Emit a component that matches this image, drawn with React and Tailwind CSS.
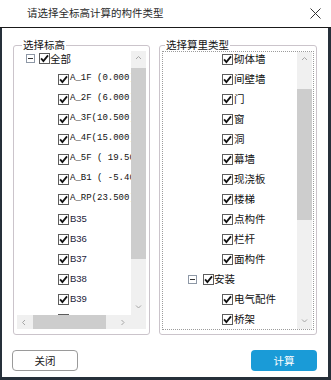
import React from 'react'

const cjk = "font-['Microsoft_YaHei','Noto_Sans_CJK_SC',sans-serif]"

function Check() {
  return (
    <svg width="11" height="11" viewBox="0 0 11 11" className="shrink-0">
      <rect x="0.5" y="0.5" width="10" height="10" fill="#fff" stroke="#5c5c5c" />
      <path d="M2.1 5.4 L4.4 8.1 L9 2.4" fill="none" stroke="#111" strokeWidth="1.8" />
    </svg>
  )
}

function Minus() {
  return (
    <svg width="9" height="9" viewBox="0 0 9 9" className="shrink-0">
      <rect x="0.5" y="0.5" width="8" height="8" fill="#fff" stroke="#8e98a6" />
      <path d="M2 4.5 H7" stroke="#333" />
    </svg>
  )
}

function Chevron({ dir }) {
  const d = {
    up: 'M1 4 L3.5 1.5 L6 4',
    down: 'M1 1.5 L3.5 4 L6 1.5',
    left: 'M4 1 L1.5 3.5 L4 6',
    right: 'M1.5 1 L4 3.5 L1.5 6',
  }[dir]
  return (
    <svg width="7" height="7" viewBox="0 0 7 7">
      <path d={d} fill="none" stroke="#a6a6a6" strokeWidth="1" />
    </svg>
  )
}

function VScroll({ gapTop, thumb }) {
  return (
    <div className="flex flex-col bg-[#f0f0f0]">
      <div className="flex h-[15px] items-center justify-center">
        <Chevron dir="up" />
      </div>
      <div className="flex-1">
        <div className="bg-[#cdcdcd]" style={{ marginTop: gapTop, height: thumb }} />
      </div>
      <div className="flex h-[15px] items-center justify-center">
        <Chevron dir="down" />
      </div>
    </div>
  )
}

const levels = [
  ['A_1F\u00a0(0.000)', 'mono'],
  ['A_2F\u00a0(6.000)', 'mono'],
  ['A_3F(10.500)', 'mono'],
  ['A_4F(15.000)', 'mono'],
  ['A_5F\u00a0(\u00a019.500)', 'mono'],
  ['A_B1\u00a0(\u00a0-5.400)', 'mono'],
  ['A_RP(23.500)', 'mono'],
  ['B35', 'sans'],
  ['B36', 'sans'],
  ['B37', 'sans'],
  ['B38', 'sans'],
  ['B39', 'sans'],
  ['B40', 'sans'],
]

const civil = ['砌体墙', '间壁墙', '门', '窗', '洞', '幕墙', '现浇板', '楼梯', '点构件', '栏杆', '面构件']
const install = ['电气配件', '桥架']

export default function App() {
  return (
    <div className={`flex h-[380px] w-[331px] flex-col bg-white text-[#111] ${cjk}`}>
      <div className="flex h-[28px] shrink-0 items-center border-b border-[#1a1a1a] pl-[27px] pr-[10px]">
        <span className="flex-1 pb-[1px] text-[10.5px] text-[#2a2a2a]">请选择全标高计算的构件类型</span>
        <svg width="11" height="11" viewBox="0 0 11 11">
          <path d="M0.5 0.5 L10.5 10.5 M10.5 0.5 L0.5 10.5" stroke="#333" strokeWidth="1" />
        </svg>
      </div>

      <div className="flex flex-1 flex-col border-b-[3px] border-l-2 border-r-[3px] border-[#26303a] px-[11px] pt-[11px] pb-[6px]">
        <div className="flex h-[296px] justify-between">
          <fieldset className="flex h-[296px] w-[137px] min-w-0 flex-col rounded-[3px] border border-[#cbc4cb] px-[3px] pb-[5px]">
            <legend className="ml-[5px] px-[1px] text-[10.5px] leading-[12px]">选择标高</legend>
            <div className="grid min-h-0 flex-1 grid-cols-[1fr_15px] grid-rows-[1fr_14px]">
              <div className="flex min-w-0 flex-col overflow-hidden">
                <div className="flex h-[18px] shrink-0 items-start pt-[2px] pl-[9px]">
                  <div className="mt-[1px]">
                    <Minus />
                  </div>
                  <div className="ml-[4px]">
                    <Check />
                  </div>
                  <span className="text-[10.5px] leading-[11px]">全部</span>
                </div>
                {levels.map(([label, kind]) => (
                  <div key={label} className="flex h-[20px] shrink-0 items-center pl-[41px]">
                    <Check />
                    <span
                      className={
                        kind === 'mono'
                          ? "ml-[1px] whitespace-pre font-['Liberation_Mono',monospace] text-[9px] text-[#111]"
                          : "ml-[1px] font-['Liberation_Sans',sans-serif] text-[9.5px] text-[#1a1a3a]"
                      }
                    >
                      {label}
                    </span>
                  </div>
                ))}
              </div>
              <VScroll gapTop={2} thumb={191} />
              <div className="flex items-center bg-[#f0f0f0]">
                <div className="flex w-[15px] justify-center">
                  <Chevron dir="left" />
                </div>
                <div className="ml-[1px] h-full w-[73px] bg-[#cdcdcd]" />
                <div className="flex-1" />
                <div className="flex w-[15px] justify-center">
                  <Chevron dir="right" />
                </div>
              </div>
              <div className="bg-[#f0f0f0]" />
            </div>
          </fieldset>

          <fieldset className="flex h-[296px] w-[158px] min-w-0 flex-col rounded-[3px] border border-[#cbc4cb] px-[2px] pb-[4px]">
            <legend className="ml-[3px] px-[1px] text-[10.5px] leading-[12px]">选择算里类型</legend>
            <div className="grid min-h-0 flex-1 grid-cols-[1fr_15px] border border-dotted border-[#9c9c9c] pr-[1px]">
              <div className="flex min-w-0 flex-col overflow-hidden">
                <div className="-mt-[3px] flex flex-col">
                  {civil.map((name) => (
                    <div key={name} className="flex h-[20px] shrink-0 items-center pl-[59px]">
                      <Check />
                      <span className="ml-[1px] text-[10.5px]">{name}</span>
                    </div>
                  ))}
                  <div className="flex h-[20px] shrink-0 items-center pl-[25px]">
                    <Minus />
                    <div className="ml-[6px]">
                      <Check />
                    </div>
                    <span className="text-[10.5px]">安装</span>
                  </div>
                  {install.map((name) => (
                    <div key={name} className="flex h-[20px] shrink-0 items-center pl-[59px]">
                      <Check />
                      <span className="ml-[1px] text-[10.5px]">{name}</span>
                    </div>
                  ))}
                </div>
              </div>
              <VScroll gapTop={22} thumb={131} />
            </div>
          </fieldset>
        </div>

        <div className="mt-[15px] flex justify-between px-[-1px]">
          <button className="-ml-[1px] flex h-[21px] w-[66px] items-center justify-center rounded-[4px] border border-[#9a9a9a] bg-white text-[10.5px] text-[#222]">
            关闭
          </button>
          <button className="flex h-[21px] w-[66px] items-center justify-center rounded-[4px] bg-[#1a9bd7] text-[10.5px] text-white">
            计算
          </button>
        </div>
      </div>
    </div>
  )
}
